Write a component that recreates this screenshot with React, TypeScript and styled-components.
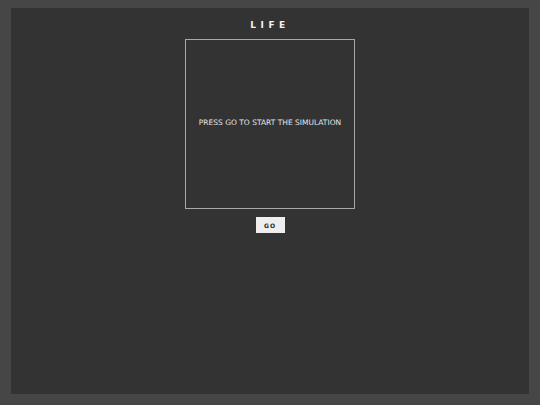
import styled, { createGlobalStyle } from 'styled-components';

const GlobalStyle = createGlobalStyle`
  html, body {
    margin: 0;
    padding: 0;
    background: #464646;
  }
  body {
    font-family: "DejaVu Sans", Verdana, sans-serif;
  }
`;

const Frame = styled.div`
  box-sizing: border-box;
  width: 540px;
  height: 405px;
  padding: 8px 11px 11px 11px;
  background: #464646;
`;

const Screen = styled.main`
  height: 100%;
  background: #333333;
  display: flex;
  flex-direction: column;
  align-items: center;
`;

const Title = styled.h1`
  margin: 12px 0 0 0;
  height: 19px;
  font-size: 9px;
  font-weight: bold;
  letter-spacing: 4.5px;
  color: #f2f2f2;
  line-height: 10px;
`;

const Board = styled.div`
  box-sizing: border-box;
  width: 170px;
  height: 170px;
  padding-bottom: 4px;
  border: 1px solid #a8a8a8;
  display: flex;
  align-items: center;
  justify-content: center;
`;

const Message = styled.p`
  margin: 0;
  font-family: "DejaVu Sans", Verdana, sans-serif;
  font-size: 7.5px;
  color: #e6e6e6;
  white-space: nowrap;
`;

const GoButton = styled.button`
  margin-top: 8px;
  width: 29px;
  height: 16px;
  padding: 0;
  border: none;
  background: #eeeeee;
  color: #222;
  font-family: "DejaVu Sans", Verdana, sans-serif;
  font-size: 6px;
  font-weight: bold;
  letter-spacing: 1px;
  cursor: pointer;
`;

export default function App() {
  return (
    <>
      <GlobalStyle />
      <Frame>
        <Screen>
          <Title>LIFE</Title>
          <Board>
            <Message>PRESS GO TO START THE SIMULATION</Message>
          </Board>
          <GoButton>GO</GoButton>
        </Screen>
      </Frame>
    </>
  );
}
